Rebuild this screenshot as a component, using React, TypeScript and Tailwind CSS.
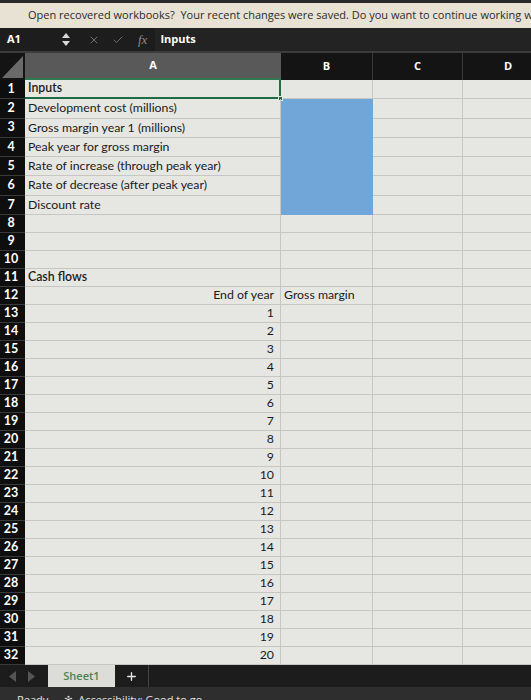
import { Plus, X, Check, PersonStanding } from 'lucide-react';

type Row = {
  a?: string;
  b?: string;
  alignA?: 'left' | 'right';
  bold?: boolean;
  blue?: boolean;
};

const rows: Row[] = [
  { a: 'Inputs', bold: true },
  { a: 'Development cost (millions)', blue: true },
  { a: 'Gross margin year 1 (millions)', blue: true },
  { a: 'Peak year for gross margin', blue: true },
  { a: 'Rate of increase (through peak year)', blue: true },
  { a: 'Rate of decrease (after peak year)', blue: true },
  { a: 'Discount rate', blue: true },
  {},
  {},
  {},
  { a: 'Cash flows', bold: true },
  { a: 'End of year', b: 'Gross margin', alignA: 'right' },
  ...Array.from({ length: 20 }, (_, i) => ({ a: String(i + 1), alignA: 'right' as const })),
];

function GridRow({ row, n }: { row: Row; n: number }) {
  const h = n <= 7 ? 'h-[19.3px]' : 'h-[18px]';
  const selected = n === 1;
  return (
    <div className={`flex ${h}`}>
      <div className="w-[25px] shrink-0 bg-[#0e0e0e] border-b border-[#3a3a3a] flex items-center justify-center text-white font-bold text-[12.5px] pr-[3px]">
        {n}
      </div>
      <div
        className={`relative w-[256px] shrink-0 flex items-center px-[3px] text-[12.3px] text-[#1b1b1b] whitespace-nowrap ${
          selected ? 'border-b-2 border-r-2 border-[#1f6b43]' : 'border-b border-r border-[#c6c6c3]'
        } ${row.alignA === 'right' ? 'justify-end pr-[6px]' : ''} ${row.bold ? 'font-semibold' : ''}`}
      >
        {row.a}
        {selected && (
          <span className="absolute -right-[4px] -bottom-[4px] w-[5px] h-[5px] bg-[#1f6b43] border border-[#e6e6e3]" />
        )}
      </div>
      <div
        className={`w-[92px] shrink-0 flex items-center px-[3px] text-[12.3px] text-[#1b1b1b] whitespace-nowrap ${
          row.blue ? 'bg-[#71a6d9]' : 'border-b border-r border-[#c6c6c3]'
        }`}
      >
        {row.b}
      </div>
      <div className="w-[90px] shrink-0 border-b border-r border-[#c6c6c3]" />
      <div className="w-[90px] shrink-0 border-b border-r border-[#c6c6c3]" />
    </div>
  );
}

export default function App() {
  return (
    <div
      className="w-[531px] h-[700px] overflow-hidden bg-[#e6e6e3] flex flex-col"
      style={{ fontFamily: 'Lato, "Open Sans", sans-serif' }}
    >
      {/* recovery banner */}
      <div
        className="h-[28px] shrink-0 bg-[#e7e2d4] border-t-[3px] border-[#2a2a2a] flex items-center pl-[28px] text-[11px] text-[#2c2c2c] whitespace-nowrap overflow-hidden"
        style={{ fontFamily: '"Open Sans", sans-serif' }}
      >
        Open recovered workbooks?&nbsp;&nbsp;Your recent changes were saved. Do you want to continue working where you left off?
      </div>

      {/* formula bar */}
      <div className="h-[23px] shrink-0 bg-[#1d1d1d] flex items-center text-white" style={{ fontFamily: '"Open Sans", sans-serif' }}>
        <span className="w-[60px] pl-[7px] text-[11px] font-bold">A1</span>
        <svg width="10" height="15" viewBox="0 0 10 15" className="ml-[1px]">
          <polygon points="5,1 9,6 1,6" fill="#d8d8d8" />
          <polygon points="1,9 9,9 5,14" fill="#d8d8d8" />
        </svg>
        <X className="ml-[17px] w-[12px] h-[12px] text-[#6c6c6c]" strokeWidth={2} />
        <Check className="ml-[12px] w-[12px] h-[12px] text-[#6c6c6c]" strokeWidth={2} />
        <span className="ml-[14px] text-[13px] italic text-[#8a8a8a]" style={{ fontFamily: '"Liberation Serif", serif' }}>
          fx
        </span>
        <span className="ml-[8px] h-full flex-1 bg-[#232323] flex items-center pl-[5px] text-[11px] font-bold">Inputs</span>
      </div>

      {/* column headers */}
      <div className="h-[29px] shrink-0 flex bg-[#141414] border-t-2 border-[#3c3c3c] text-white font-bold text-[11px]" style={{ fontFamily: '"Open Sans", sans-serif' }}>
        <div className="w-[25px] shrink-0 bg-[#141414] relative overflow-hidden">
          <svg className="absolute inset-0" width="25" height="27" viewBox="0 0 25 27">
            <polygon points="23,3 23,25 2,25" fill="#6a6a6a" />
          </svg>
        </div>
        <div className="w-[256px] shrink-0 bg-[#595959] border-b-2 border-[#2f7a52] flex items-center justify-center">A</div>
        <div className="w-[92px] shrink-0 border-r border-[#3a3a3a] flex items-center justify-center">B</div>
        <div className="w-[90px] shrink-0 border-r border-[#3a3a3a] flex items-center justify-center">C</div>
        <div className="w-[90px] shrink-0 flex items-center justify-center">D</div>
      </div>

      {/* grid */}
      <div className="flex flex-col">
        {rows.map((r, i) => (
          <GridRow key={i} row={r} n={i + 1} />
        ))}
      </div>

      {/* sheet tabs */}
      <div className="h-[22px] shrink-0 bg-[#1c1c1c] flex items-stretch" style={{ fontFamily: '"Open Sans", sans-serif' }}>
        <div className="flex items-center gap-[10px] pl-[9px] w-[48px]">
          <svg width="8" height="11" viewBox="0 0 8 11">
            <polygon points="7,0 7,11 0,5.5" fill="#555" />
          </svg>
          <svg width="8" height="11" viewBox="0 0 8 11">
            <polygon points="1,0 8,5.5 1,11" fill="#555" />
          </svg>
        </div>
        <div className="w-[67px] bg-[#dcdcd8] flex items-center justify-center text-[11px] font-semibold text-[#4a8559]">Sheet1</div>
        <div className="w-[34px] flex items-center justify-center border-r border-[#444]">
          <Plus className="w-[13px] h-[13px] text-[#e6e6e6]" strokeWidth={2.5} />
        </div>
      </div>

      {/* status bar */}
      <div className="flex-1 bg-[#2e2e2e] flex items-start pt-[5px] text-[11px] text-[#e4e4e4] whitespace-nowrap" style={{ fontFamily: '"Open Sans", sans-serif' }}>
        <span className="pl-[17px]">Ready</span>
        <PersonStanding className="ml-[14px] mt-[2px] w-[13px] h-[13px] text-[#e4e4e4]" strokeWidth={2} />
        <span className="ml-[3px]">Accessibility: Good to go</span>
      </div>
    </div>
  );
}
